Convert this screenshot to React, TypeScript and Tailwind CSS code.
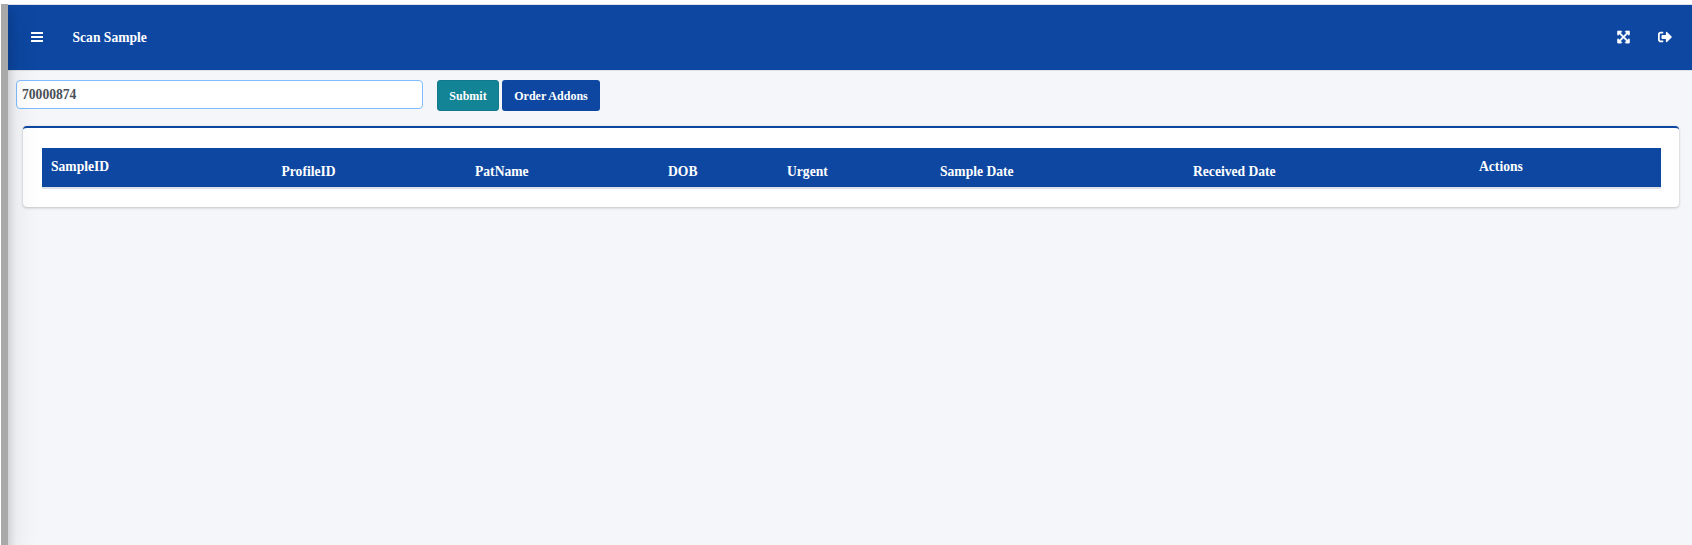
import React from "react";
import { FaExpandArrowsAlt, FaSignOutAlt } from "react-icons/fa";

const columns = [
  { label: "SampleID", cell: "w-[230.5px] pt-[11px]" },
  { label: "ProfileID", cell: "w-[193.5px] pt-4" },
  { label: "PatName", cell: "w-[193px] pt-4" },
  { label: "DOB", cell: "w-[119px] pt-4" },
  { label: "Urgent", cell: "w-[153px] pt-4" },
  { label: "Sample Date", cell: "w-[253px] pt-4" },
  { label: "Received Date", cell: "w-[286px] pt-4" },
  { label: "Actions", cell: "grow pt-[11px]" },
];

function BarsIcon() {
  return (
    <svg className="h-[10px] w-3" viewBox="0 0 12 10" fill="currentColor">
      <rect width="12" height="2" rx="0.3" />
      <rect y="4" width="12" height="2" rx="0.3" />
      <rect y="8" width="12" height="2" rx="0.3" />
    </svg>
  );
}

export default function App() {
  return (
    <div className="flex h-[545px] w-full flex-col overflow-hidden bg-white font-['Liberation_Serif',serif] text-[13.6px] font-bold">
      <div className="h-1 shrink-0" />
      <div className="flex min-h-0 grow pl-px">
        <aside className="z-10 -mt-1 w-[7px] shrink-0 bg-[#a9a9a9] shadow-[0_14px_28px_rgba(0,0,0,0.25),0_10px_10px_rgba(0,0,0,0.22)] [clip-path:inset(4px_-60px_0_0)]" />
        <div className="flex min-w-0 grow flex-col bg-[#f4f6f9]">
          <header className="flex h-[67px] shrink-0 items-center border-y border-[#dee2e6] bg-[#0d47a1] pr-5 pl-[23px] text-white">
            <button aria-label="Menu" className="-mt-px"><BarsIcon /></button>
            <h1 className="ml-[29.5px] leading-5">Scan Sample</h1>
            <div className="-mt-px ml-auto flex items-center gap-[28.5px]">
              <button aria-label="Fullscreen"><FaExpandArrowsAlt className="h-[14px] w-[13px] stroke-current [stroke-width:18]" /></button>
              <button aria-label="Sign out"><FaSignOutAlt className="h-[14px] w-[14px]" /></button>
            </div>
          </header>
          <main className="pt-[9px] pr-[13px] pl-2">
            <div className="flex items-start">
              <input
                defaultValue="70000874"
                aria-label="Sample number"
                className="h-[29px] w-[407px] rounded-[4px] border border-[#80bdff] bg-white px-[5px] text-[#495057] outline-none"
              />
              <button className="ml-[14px] h-[31px] w-[62px] rounded-[3px] border border-[#117a8b] bg-[#138496] text-[12px] text-white">Submit</button>
              <button className="ml-[3px] h-[31px] w-[98px] rounded-[3px] bg-[#0d47a1] text-[12px] text-white">Order Addons</button>
            </div>
            <section className="mt-[15px] ml-[7px] h-[81px] rounded-[4px] border-t-2 border-[#0d47a1] bg-white px-[19px] pt-5 shadow-[0_0_1px_rgba(0,0,0,0.13),0_1px_3px_rgba(0,0,0,0.2)]">
              <div className="-mr-px h-[41px] border-b-2 border-[#dee2e6] bg-[#0d47a1] bg-clip-padding">
                <div className="flex pl-[9px] leading-4 text-white">
                  {columns.map((column) => (
                    <div key={column.label} className={column.cell}>{column.label}</div>
                  ))}
                </div>
              </div>
            </section>
          </main>
        </div>
      </div>
    </div>
  );
}
